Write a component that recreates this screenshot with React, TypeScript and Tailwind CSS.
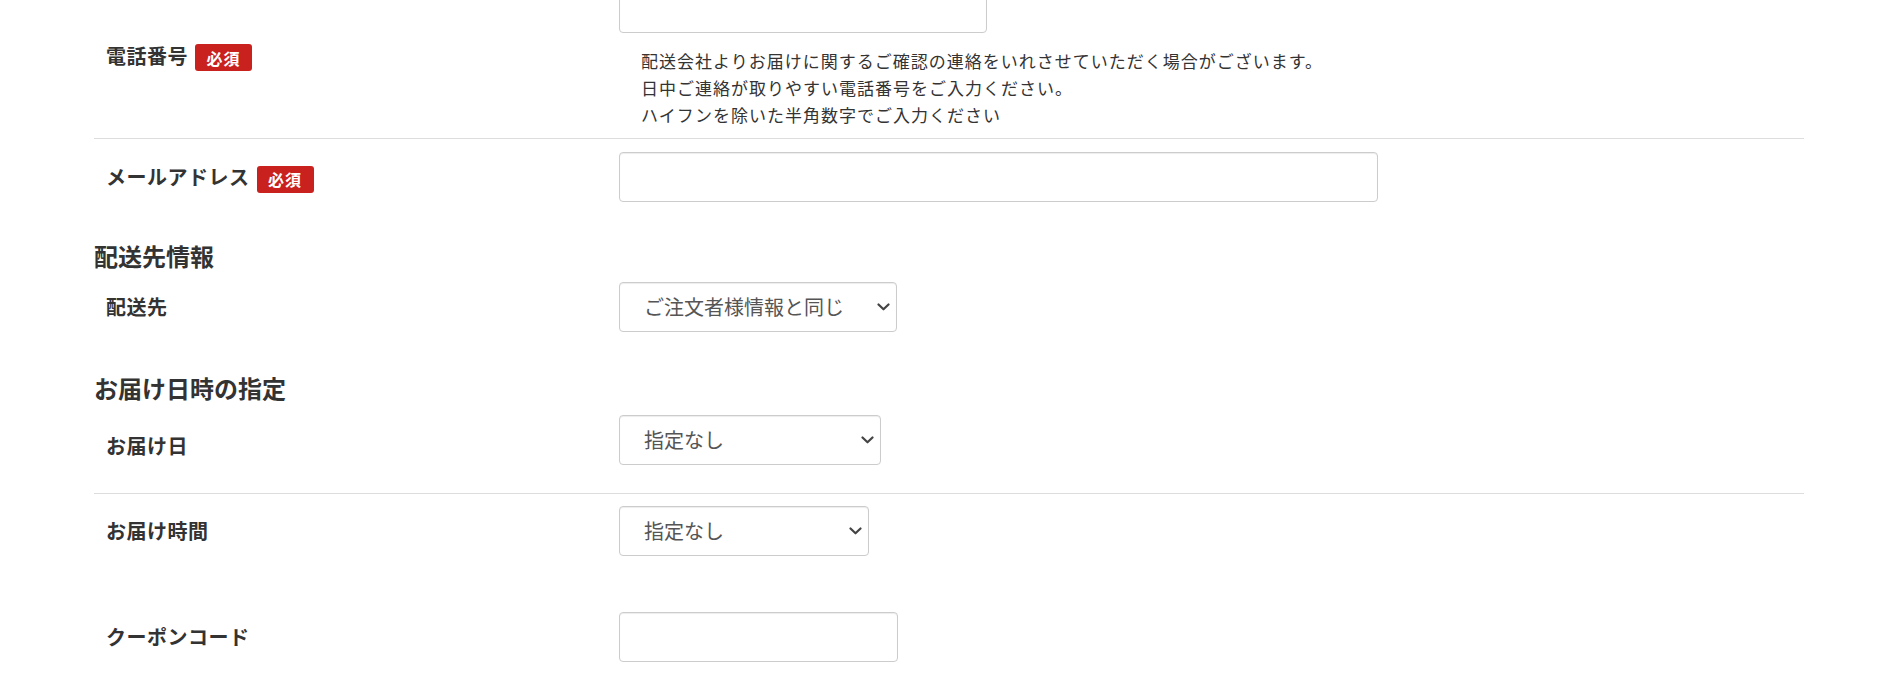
import React from "react";

function Badge() {
  return (
    <span className="ml-[7px] mt-[4px] inline-flex h-[27px] w-[57px] items-center justify-center rounded-[3px] bg-[#c9211e] text-[16px] font-bold leading-none tracking-[1px] text-white">
      必須
    </span>
  );
}

function Chevron() {
  return (
    <svg
      className="pointer-events-none absolute right-[7px] top-1/2 h-[8px] w-[13px] -translate-y-1/2"
      viewBox="0 0 13 8"
      fill="none"
    >
      <path d="M1.5 1.5 L6.5 6.3 L11.5 1.5" stroke="#444" strokeWidth="2.2" strokeLinecap="round" strokeLinejoin="round" />
    </svg>
  );
}

function Select({ width, value }: { width: string; value: string }) {
  return (
    <div className={`relative ${width}`}>
      <select
        defaultValue={value}
        className="h-[50px] w-full appearance-none rounded-[4px] border border-[#cccccc] bg-white pl-[24px] pr-[28px] text-[20px] text-[#555555] shadow-[inset_0_1px_1px_rgba(0,0,0,0.075)] outline-none"
      >
        <option value={value}>{value}</option>
      </select>
      <Chevron />
    </div>
  );
}

function TextInput({ width }: { width: string }) {
  return (
    <input
      type="text"
      className={`block h-[50px] ${width} rounded-[4px] border border-[#cccccc] bg-white px-[12px] text-[18px] shadow-[inset_0_1px_1px_rgba(0,0,0,0.075)] outline-none`}
    />
  );
}

function Row({
  label,
  required,
  className,
  children,
}: {
  label: string;
  required?: boolean;
  className: string;
  children: React.ReactNode;
}) {
  return (
    <div className={`flex items-center ${className}`}>
      <div className="flex w-[525px] shrink-0 items-center pl-[12px]">
        <span className="text-[20px] font-bold tracking-[0.5px] text-[#333333]">{label}</span>
        {required && <Badge />}
      </div>
      <div>{children}</div>
    </div>
  );
}

export default function App() {
  return (
    <div className="h-[688px] w-full overflow-hidden bg-white [font-family:'Noto_Sans_CJK_JP','Noto_Sans',sans-serif] text-[#333333]">
      <div className="-mt-[30px] ml-[94px] w-[1710px]">
        {/* お客様情報 */}
        <Row label="電話番号" required className="border-b border-[#dddddd] pt-[13px] pb-[10px]">
          <TextInput width="w-[368px]" />
          <div className="mt-[14px] pl-[22px] text-[17px] leading-[27px] tracking-[1px] text-[#333333]">
            <p>配送会社よりお届けに関するご確認の連絡をいれさせていただく場合がございます。</p>
            <p>日中ご連絡が取りやすい電話番号をご入力ください。</p>
            <p>ハイフンを除いた半角数字でご入力ください</p>
          </div>
        </Row>
        <Row label="メールアドレス" required className="pt-[13px] pb-[12px]">
          <TextInput width="w-[759px]" />
        </Row>

        {/* 配送先 */}
        <h2 className="mt-[28px] text-[24px] font-bold leading-[28px] text-[#333333]">配送先情報</h2>
        <Row label="配送先" className="pt-[12px] pb-[12px]">
          <Select width="w-[278px]" value="ご注文者様情報と同じ" />
        </Row>

        {/* お届け日時 */}
        <h2 className="mt-[30px] text-[24px] font-bold leading-[28px] text-[#333333]">お届け日時の指定</h2>
        <Row label="お届け日" className="border-b border-[#dddddd] pt-[13px] pb-[16px]">
          <div className="pb-[12px]">
            <Select width="w-[262px]" value="指定なし" />
          </div>
        </Row>
        <Row label="お届け時間" className="pt-[12px] pb-[13px]">
          <Select width="w-[250px]" value="指定なし" />
        </Row>

        {/* クーポン */}
        <Row label="クーポンコード" className="mt-[31px] pt-[12px] pb-[12px]">
          <TextInput width="w-[279px]" />
        </Row>
      </div>
    </div>
  );
}
